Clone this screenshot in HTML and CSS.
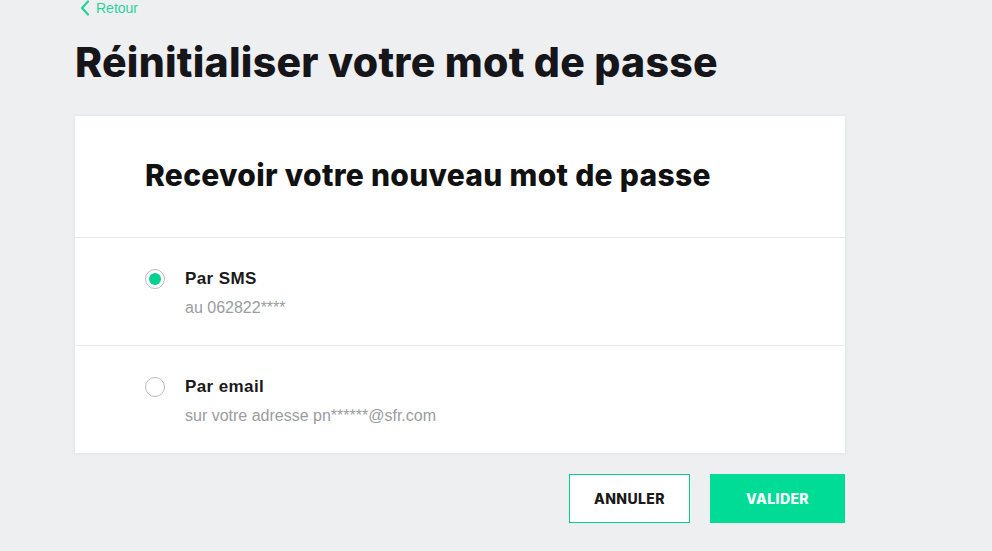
FILE: index.html
```html
<!DOCTYPE html>
<html lang="fr">
<head>
<meta charset="utf-8">
<title>Réinitialiser votre mot de passe</title>
<link rel="stylesheet" href="styles.css">
</head>
<body>
<main class="page">
  <a class="back" href="#">
    <svg class="back-icon" width="10" height="16" viewBox="0 0 10 16"><path d="M8 1.5 L2 8 L8 14.5" fill="none" stroke="#1fd39a" stroke-width="2.2" stroke-linecap="round" stroke-linejoin="round"/></svg>
    <span>Retour</span>
  </a>
  <h1 class="title">Réinitialiser votre mot de passe</h1>
  <section class="card">
    <h2 class="card-title">Recevoir votre nouveau mot de passe</h2>
    <label class="option">
      <span class="radio radio-on"></span>
      <span class="option-text">
        <span class="option-label">Par SMS</span>
        <span class="option-sub">au 062822****</span>
      </span>
    </label>
    <label class="option">
      <span class="radio"></span>
      <span class="option-text">
        <span class="option-label">Par email</span>
        <span class="option-sub">sur votre adresse pn******@sfr.com</span>
      </span>
    </label>
  </section>
  <div class="actions">
    <button class="btn btn-outline">ANNULER</button>
    <button class="btn btn-primary">VALIDER</button>
  </div>
</main>
</body>
</html>
```
FILE: styles.css
```css
html, body {
  margin: 0;
  padding: 0;
  background: #eeeff1;
}
body {
  font-family: "Liberation Sans", Arial, sans-serif;
  color: #1a1a1a;
}
.page {
  width: 770px;
  margin-left: 75px;
  display: flex;
  flex-direction: column;
}
.back {
  display: flex;
  align-items: center;
  gap: 6px;
  height: 16px;
  margin-left: 5px;
  color: #2ad39c;
  text-decoration: none;
  font-size: 14px;
}
.title {
  margin: 22px 0 0;
  font-family: Inter, "Open Sans", sans-serif;
  font-weight: 800;
  font-size: 41px;
  line-height: 48px;
  letter-spacing: 0.25px;
  color: #16161a;
}
.card {
  margin-top: 30px;
  background: #fff;
  box-shadow: 0 0 4px rgba(0,0,0,0.08);
  display: flex;
  flex-direction: column;
}
.card-title {
  margin: 0;
  padding: 0 70px 4px;
  height: 117px;
  display: flex;
  align-items: center;
  font-family: Inter, "Open Sans", sans-serif;
  font-weight: 800;
  font-size: 30px;
  letter-spacing: 0.3px;
  color: #111;
  border-bottom: 1px solid #e9e9eb;
}
.option {
  display: flex;
  gap: 20px;
  padding: 30px 70px 0;
  height: 77px;
}
.option + .option {
  border-top: 1px solid #e9e9eb;
  height: 77px;
}
.radio {
  width: 18px;
  height: 18px;
  border: 1px solid #b7b9bd;
  border-radius: 50%;
  box-sizing: content-box;
  display: flex;
  align-items: center;
  justify-content: center;
  margin-top: 1px;
  flex-shrink: 0;
}
.radio-on::after {
  content: "";
  width: 12px;
  height: 12px;
  border-radius: 50%;
  background: #00d18f;
}
.option-text {
  display: flex;
  flex-direction: column;
  gap: 9px;
  padding-top: 1px;
}
.option-label {
  font-weight: bold;
  font-size: 17px;
  line-height: 20px;
  letter-spacing: 0.4px;
  color: #1a1a1a;
}
.option-sub {
  font-size: 16px;
  line-height: 19px;
  color: #9a9ca1;
}
.actions {
  margin-top: 21px;
  display: flex;
  justify-content: flex-end;
  gap: 20px;
}
.btn {
  font-family: Inter, "Open Sans", sans-serif;
  font-weight: 800;
  font-size: 14px;
  letter-spacing: 0.4px;
  border: 1px solid #00d18f;
  height: 49px;
  cursor: pointer;
}
.btn-outline {
  width: 121px;
  background: #fff;
  color: #1a1a1a;
}
.btn-primary {
  width: 135px;
  background: #00db95;
  border-color: #00db95;
  color: #fff;
}
```
